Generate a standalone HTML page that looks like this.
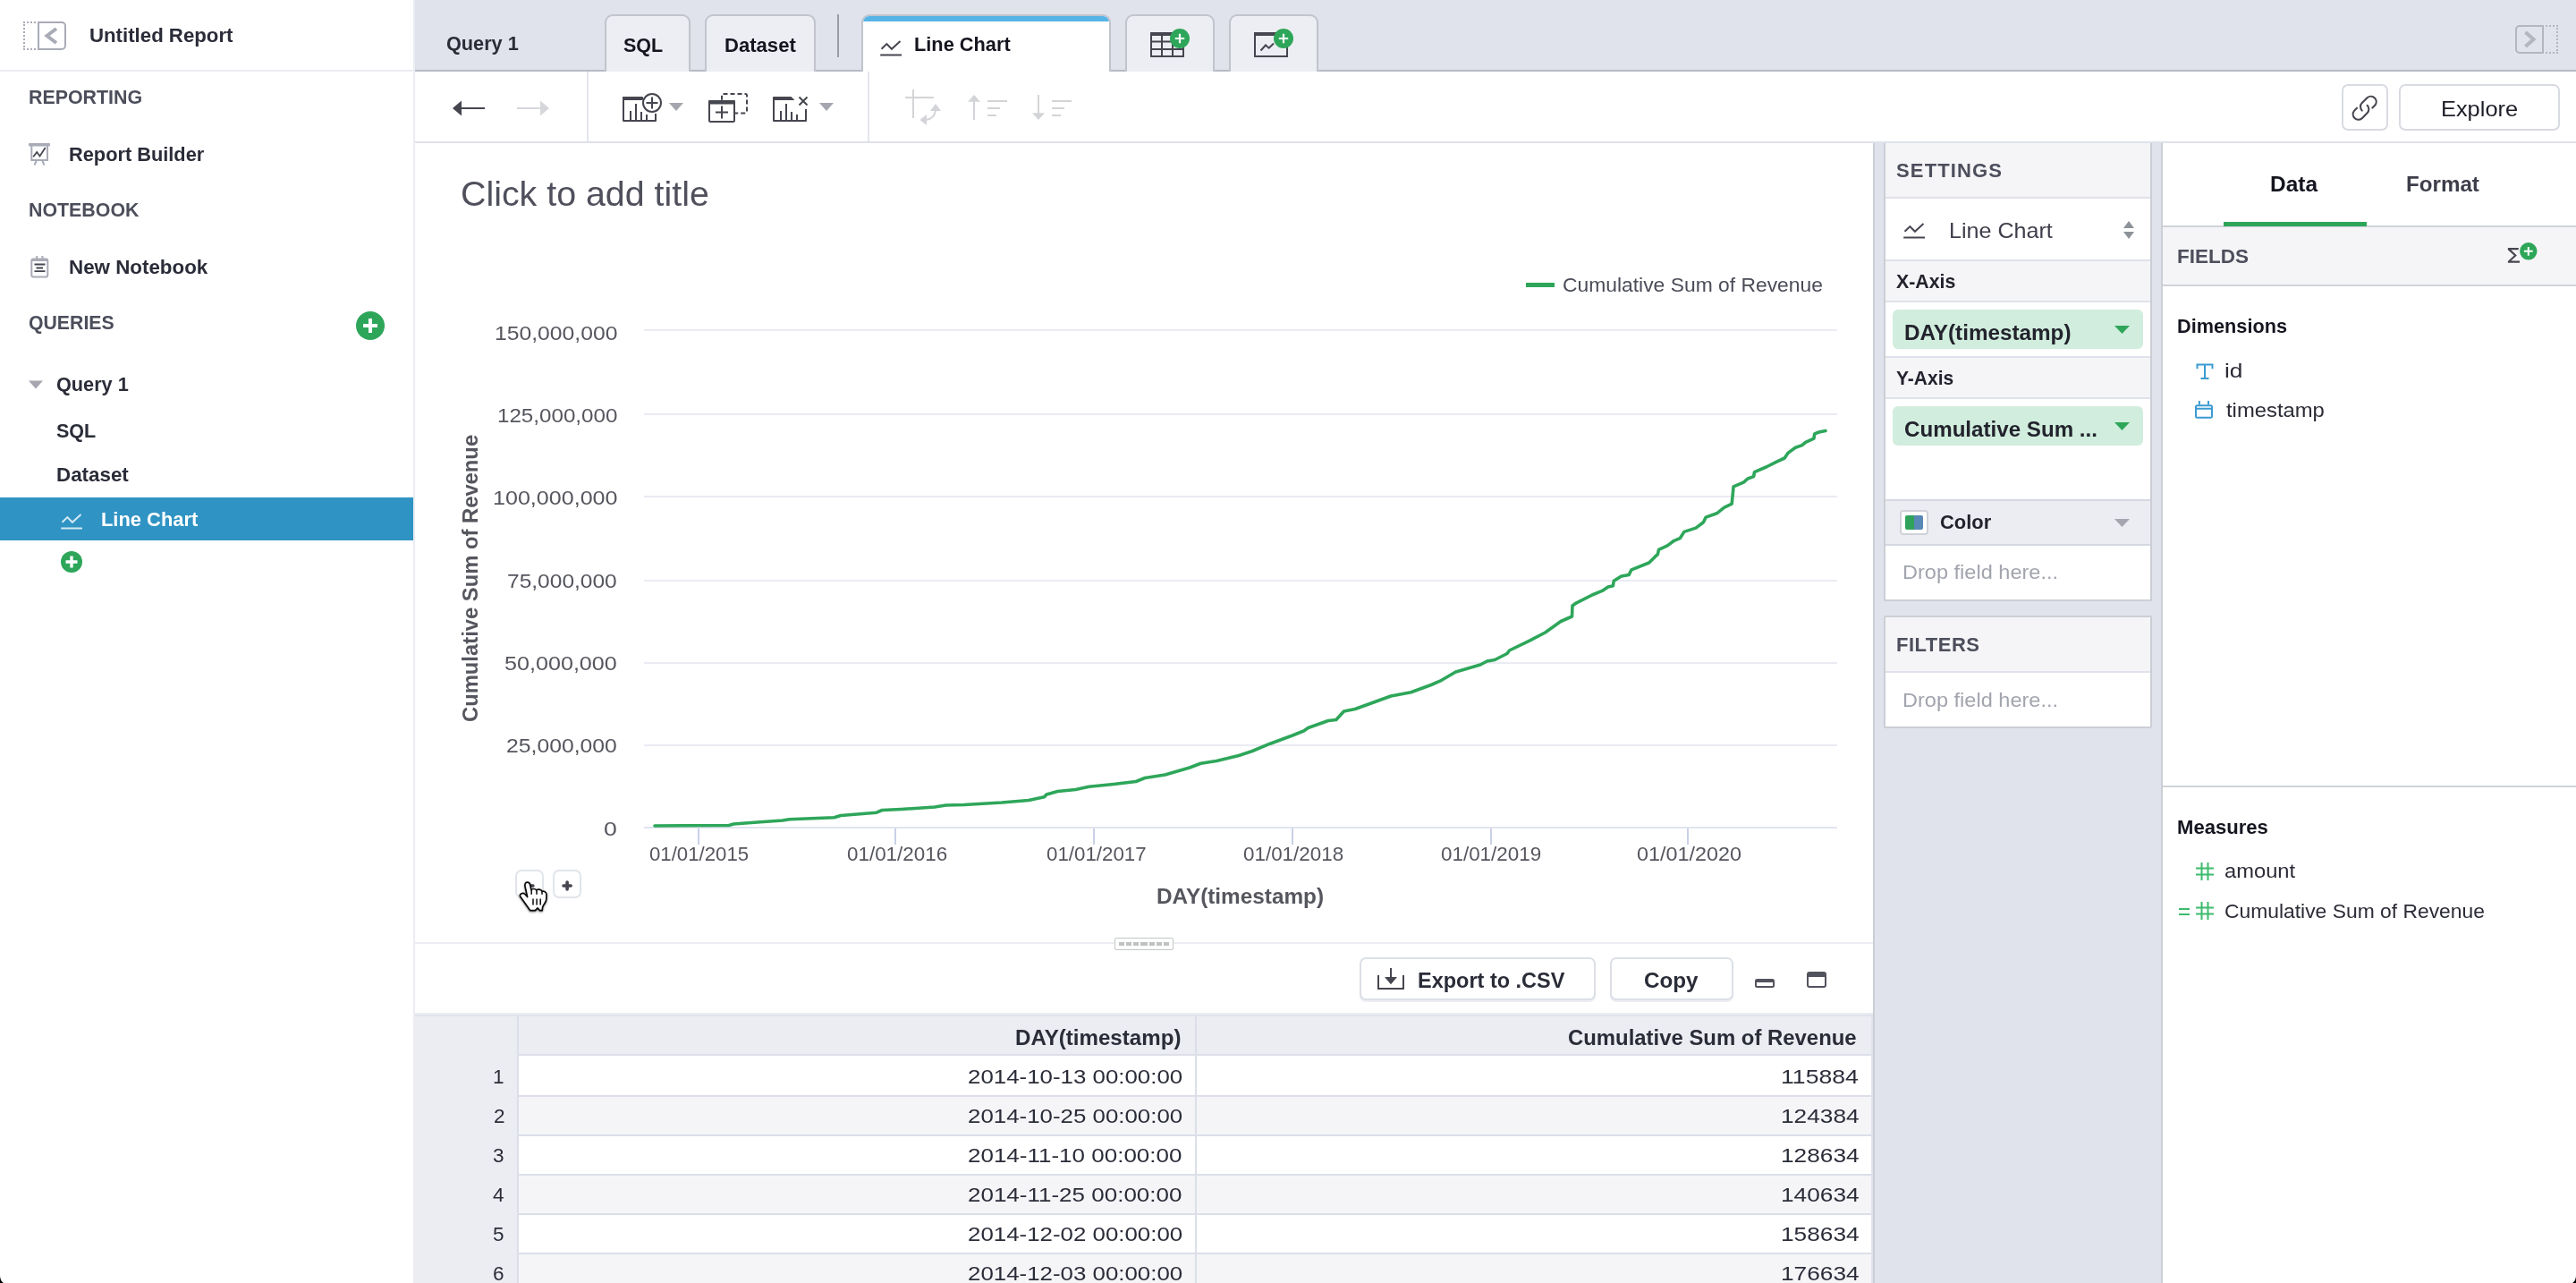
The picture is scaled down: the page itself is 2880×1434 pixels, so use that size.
<!DOCTYPE html>
<html lang="en"><head><meta charset="utf-8"><title>Untitled Report - Line Chart</title>
<style>
html,body{margin:0;padding:0;width:2880px;height:1434px;overflow:hidden;}
body{width:2880px;height:1434px;overflow:hidden;background:#fff;position:relative;font-family:"Liberation Sans",sans-serif;}
div,span.t,svg.i{position:absolute;box-sizing:border-box;}
span.t{white-space:pre;transform-origin:0 0;display:block;}
svg.i{overflow:visible;}
</style></head><body>
<div id="app" style="left:0;top:0;width:2880px;height:1434px;overflow:hidden;">
<!-- sidebar -->
<div style="left:0px;top:0px;width:462px;height:1434px;background:#fff;"></div>
<div style="left:462px;top:0px;width:2px;height:1434px;background:#ecedf3;"></div>
<div style="left:0px;top:78px;width:462px;height:2px;background:#ecedf3;"></div>
<div style="left:26px;top:24px;width:18px;height:32px;border:2px dotted #a9abb6;border-right:none;"></div>
<div style="left:42px;top:24px;width:32px;height:32px;border:2px solid #a9abb6;border-radius:0 5px 5px 0;"></div>
<svg class="i" style="left:42px;top:24px;" width="32" height="32" viewBox="0 0 32 32"><path d="M21 8 L10.5 16 L21 24" fill="none" stroke="#a9abb6" stroke-width="4"/></svg>
<span class="t" style="left:100.01px;top:29px;font-size:22.5px;line-height:22.5px;color:#2a2c38;font-weight:bold;transform:scaleX(0.9876);">Untitled Report</span>
<span class="t" style="left:31.55px;top:98px;font-size:22.5px;line-height:22.5px;color:#4c4e5b;font-weight:bold;transform:scaleX(0.9504);">REPORTING</span>
<span class="t" style="left:77.03px;top:162px;font-size:22.5px;line-height:22.5px;color:#2a2c38;font-weight:bold;transform:scaleX(0.9677);">Report Builder</span>
<span class="t" style="left:31.55px;top:224px;font-size:22.5px;line-height:22.5px;color:#4c4e5b;font-weight:bold;transform:scaleX(0.9496);">NOTEBOOK</span>
<span class="t" style="left:77.01px;top:288px;font-size:22.5px;line-height:22.5px;color:#2a2c38;font-weight:bold;transform:scaleX(0.9935);">New Notebook</span>
<span class="t" style="left:31.56px;top:350px;font-size:22.5px;line-height:22.5px;color:#4c4e5b;font-weight:bold;transform:scaleX(0.9444);">QUERIES</span>
<span class="t" style="left:63.04px;top:419px;font-size:22.5px;line-height:22.5px;color:#2a2c38;font-weight:bold;transform:scaleX(0.9634);">Query 1</span>
<span class="t" style="left:63.04px;top:471px;font-size:22.5px;line-height:22.5px;color:#2a2c38;font-weight:bold;transform:scaleX(0.9556);">SQL</span>
<span class="t" style="left:63.01px;top:520px;font-size:22.5px;line-height:22.5px;color:#2a2c38;font-weight:bold;transform:scaleX(0.9938);">Dataset</span>
<div style="left:0px;top:556px;width:462px;height:48px;background:#2f93c3;"></div>
<span class="t" style="left:113.03px;top:570px;font-size:22.5px;line-height:22.5px;color:#fff;font-weight:bold;transform:scaleX(0.9727);">Line Chart</span>
<svg class="i" style="left:30px;top:158px;" width="28" height="28" viewBox="0 0 28 28"><rect x="2" y="2" width="24" height="3.5" rx="1" fill="#a9abb6"/>
<path d="M5.300 5 V21 H23 V5" fill="none" stroke="#a9abb6" stroke-width="2"/>
<path d="M11 21 L8.5 26.5 M17 21 L19.5 26.5" stroke="#a9abb6" stroke-width="2" fill="none"/>
<path d="M7.2 17.2 L11.2 12 L14.5 16.5 L20.7 7" fill="none" stroke="#45464f" stroke-width="1.8"/></svg>
<svg class="i" style="left:30px;top:284px;" width="28" height="28" viewBox="0 0 28 28"><rect x="5.300" y="5.500" width="18" height="20" rx="2" fill="none" stroke="#a9abb6" stroke-width="2"/>
<rect x="5.300" y="5" width="18" height="3" fill="#a9abb6"/>
<path d="M11.2 2 V6 M17.4 2 V6" stroke="#a9abb6" stroke-width="2"/>
<path d="M8.5 11.5 H20.5 M10.5 15.5 H18 M8.5 19.2 H20.5" stroke="#45464f" stroke-width="1.8"/></svg>
<svg class="i" style="left:398px;top:348px;" width="32" height="32" viewBox="0 0 32 32"><circle cx="16" cy="16" r="16" fill="#2ea65a"/><path d="M16 8 V24 M8 16 H24" stroke="#fff" stroke-width="4"/></svg>
<svg class="i" style="left:32px;top:425px;" width="16" height="10" viewBox="0 0 16 10"><path d="M0 0.5 H16 L8 9.5 Z" fill="#a5a6b0"/></svg>
<svg class="i" style="left:68px;top:573.5px;" width="24" height="18" viewBox="0 0 24 18"><path d="M1.5 9.8 L7.4 4.1 L12.9 9.8 L22.5 1" fill="none" stroke="#d3e9f4" stroke-width="2"/><path d="M0.2 16.5 H24" stroke="#d3e9f4" stroke-width="2"/></svg>
<svg class="i" style="left:68px;top:616px;" width="24" height="24" viewBox="0 0 24 24"><circle cx="12" cy="12" r="12" fill="#2ea65a"/><path d="M12 5.5 V18.5 M5.5 12 H18.5" stroke="#fff" stroke-width="3.4"/></svg>
<!-- tab bar -->
<div style="left:464px;top:0px;width:2416px;height:80px;background:#e0e3ec;"></div>
<div style="left:464px;top:78px;width:2416px;height:2px;background:#b7bac4;"></div>
<span class="t" style="left:499.04px;top:38px;font-size:22.5px;line-height:22.5px;color:#2a2c38;font-weight:bold;transform:scaleX(0.9634);">Query 1</span>
<div style="left:676px;top:16px;width:96px;height:64px;background:#edeef3;border:2px solid #c1c4cd;border-bottom:none;border-radius:9px 9px 0 0;overflow:hidden;"></div>
<div style="left:788px;top:16px;width:124px;height:64px;background:#edeef3;border:2px solid #c1c4cd;border-bottom:none;border-radius:9px 9px 0 0;overflow:hidden;"></div>
<div style="left:936px;top:16px;width:2px;height:48px;background:#9b9da8;"></div>
<div style="left:962.5px;top:16px;width:279px;height:64px;background:#fff;border:2px solid #c1c4cd;border-bottom:none;border-radius:9px 9px 0 0;overflow:hidden;"><div style="left:0;top:0;right:0;height:6px;background:#56b4e6;width:100%"></div></div>
<div style="left:1258px;top:16px;width:100px;height:64px;background:#edeef3;border:2px solid #c1c4cd;border-bottom:none;border-radius:9px 9px 0 0;overflow:hidden;"></div>
<div style="left:1374px;top:16px;width:100px;height:64px;background:#edeef3;border:2px solid #c1c4cd;border-bottom:none;border-radius:9px 9px 0 0;overflow:hidden;"></div>
<span class="t" style="left:697.04px;top:40px;font-size:22.5px;line-height:22.5px;color:#14151f;font-weight:bold;transform:scaleX(0.9556);">SQL</span>
<span class="t" style="left:810.02px;top:40px;font-size:22.5px;line-height:22.5px;color:#14151f;font-weight:bold;transform:scaleX(0.9812);">Dataset</span>
<svg class="i" style="left:984px;top:44.5px;" width="24" height="18" viewBox="0 0 24 18"><path d="M1.5 9.8 L7.4 4.1 L12.9 9.8 L22.5 1" fill="none" stroke="#45464f" stroke-width="2"/><path d="M0.2 16.5 H24" stroke="#45464f" stroke-width="2"/></svg>
<span class="t" style="left:1021.53px;top:39px;font-size:22.5px;line-height:22.5px;color:#14151f;font-weight:bold;transform:scaleX(0.9682);">Line Chart</span>
<svg class="i" style="left:1286px;top:36px;" width="38" height="28" viewBox="0 0 38 28"><path d="M1 1 H37 V27 H1 Z" fill="none" stroke="#45464f" stroke-width="2"/>
<rect x="0" y="0" width="38" height="4" rx="1" fill="#45464f"/>
<path d="M13 2 V27 M25 2 V27 M1 10.5 H37 M1 19 H37" stroke="#45464f" stroke-width="2" fill="none"/></svg>
<svg class="i" style="left:1308px;top:32px;" width="22" height="22" viewBox="0 0 22 22"><circle cx="11" cy="11" r="11" fill="#2ea65a"/><path d="M11 5.8 V16.2 M5.8 11 H16.2" stroke="#fff" stroke-width="2.2"/></svg>
<svg class="i" style="left:1402px;top:36px;" width="38" height="28" viewBox="0 0 38 28"><path d="M1 1 H37 V27 H1 Z" fill="none" stroke="#45464f" stroke-width="2"/>
<rect x="0" y="0" width="38" height="4" rx="1" fill="#45464f"/>
<path d="M7.5 20.5 L13 14.5 L16.7 17.7 L22 12.5" stroke="#45464f" stroke-width="2" fill="none"/></svg>
<svg class="i" style="left:1424px;top:32px;" width="22" height="22" viewBox="0 0 22 22"><circle cx="11" cy="11" r="11" fill="#2ea65a"/><path d="M11 5.8 V16.2 M5.8 11 H16.2" stroke="#fff" stroke-width="2.2"/></svg>
<div style="left:2812px;top:28px;width:32px;height:32px;border:2px solid #b3b5c0;border-radius:5px 0 0 5px;"></div>
<div style="left:2842px;top:28px;width:18px;height:32px;border:2px dotted #b3b5c0;border-left:none;"></div>
<svg class="i" style="left:2812px;top:28px;" width="32" height="32" viewBox="0 0 32 32"><path d="M11.5 8 L20.5 16 L11.5 24" fill="none" stroke="#b3b5c0" stroke-width="4"/></svg>
<!-- toolbar -->
<div style="left:464px;top:80px;width:2416px;height:78px;background:#fff;"></div>
<div style="left:464px;top:158px;width:2416px;height:2px;background:#dfe2ea;"></div>
<div style="left:656px;top:80px;width:2px;height:78px;background:#e4e6ed;"></div>
<div style="left:970px;top:80px;width:2px;height:78px;background:#e4e6ed;"></div>
<svg class="i" style="left:506px;top:111px;" width="36" height="20" viewBox="0 0 36 20"><path d="M0 10 L10 1.5 V18.5 Z" fill="#45464f"/><path d="M8 10 H36" stroke="#45464f" stroke-width="2"/></svg>
<svg class="i" style="left:578px;top:111px;" width="36" height="20" viewBox="0 0 36 20"><path d="M36 10 L26 1.5 V18.5 Z" fill="#d6d7db"/><path d="M0 10 H28" stroke="#d6d7db" stroke-width="2"/></svg>
<svg class="i" style="left:696px;top:102px;" width="46" height="36" viewBox="0 0 46 36"><path d="M1 7 V33 H37 V25" fill="none" stroke="#45464f" stroke-width="2" stroke-linejoin="round"/>
<path d="M0 8 H22 V6 H0 Z M0 6 H24" fill="#45464f" stroke="#45464f" stroke-width="0"/>
<rect x="0" y="6" width="23" height="4" rx="1" fill="#45464f"/>
<path d="M9 22 V33 M15 14 V33 M21 23 V33 M27 26 V33" stroke="#45464f" stroke-width="2"/>
<circle cx="33" cy="13" r="10" fill="#fff" stroke="#45464f" stroke-width="2"/>
<path d="M33 6.5 V19.5 M26.5 13 H39.5" stroke="#45464f" stroke-width="2"/></svg>
<svg class="i" style="left:748px;top:114.5px;" width="16" height="9" viewBox="0 0 16 9"><path d="M0 0 H16 L8 9 Z" fill="#a5a6b0"/></svg>
<svg class="i" style="left:792px;top:102px;" width="46" height="36" viewBox="0 0 46 36"><rect x="15" y="3" width="28" height="21.5" rx="1.5" fill="none" stroke="#45464f" stroke-width="2" stroke-dasharray="5 3"/>
<rect x="1" y="11" width="28" height="23" rx="1.5" fill="#fff" stroke="#45464f" stroke-width="2"/>
<rect x="0" y="10" width="30" height="4.5" rx="1" fill="#45464f"/>
<path d="M15 16.5 V30.5 M8 23.5 H22" stroke="#45464f" stroke-width="2"/></svg>
<svg class="i" style="left:864px;top:102px;" width="46" height="36" viewBox="0 0 46 36"><path d="M1 7 V33 H37 V20" fill="none" stroke="#45464f" stroke-width="2" stroke-linejoin="round"/>
<path d="M0 6.8 Q0 6 1 6 H20.5 L24.5 10 H0 Z" fill="#45464f"/>
<path d="M9 22 V33 M15 14 V33 M21 23 V33 M27 26 V33" stroke="#45464f" stroke-width="2"/>
<path d="M29.5 6.5 L38.5 15.5 M38.5 6.5 L29.5 15.5" stroke="#45464f" stroke-width="2"/></svg>
<svg class="i" style="left:916px;top:114.5px;" width="16" height="9" viewBox="0 0 16 9"><path d="M0 0 H16 L8 9 Z" fill="#a5a6b0"/></svg>
<svg class="i" style="left:1010px;top:98px;" width="46" height="44" viewBox="0 0 46 44"><path d="M11 2 V34 M2 11 H34" stroke="#d3d4d7" stroke-width="2"/>
<path d="M36 25 Q35 35 25 36" fill="none" stroke="#d3d4d7" stroke-width="2"/>
<path d="M36 18 L30 26 H42 Z M18.5 36 L26 30 V42 Z" fill="#d3d4d7"/></svg>
<svg class="i" style="left:1080px;top:104px;" width="48" height="32" viewBox="0 0 48 32"><path d="M9 8 V30" stroke="#d3d4d7" stroke-width="2"/><path d="M9 2 L2 9.8 H16 Z" fill="#d3d4d7"/>
<path d="M24 9 H46 M24 17 H38 M24 25 H34" stroke="#d3d4d7" stroke-width="2"/></svg>
<svg class="i" style="left:1152px;top:104px;" width="48" height="32" viewBox="0 0 48 32"><path d="M9 2 V24" stroke="#d3d4d7" stroke-width="2"/><path d="M9 30 L2 22.2 H16 Z" fill="#d3d4d7"/>
<path d="M24 9 H46 M24 17 H38 M24 25 H34" stroke="#d3d4d7" stroke-width="2"/></svg>
<div style="left:2618px;top:94px;width:52px;height:52px;background:#fff;border:2px solid #d9dbe2;border-radius:7px;"></div>
<div style="left:2682px;top:94px;width:180px;height:52px;background:#fff;border:2px solid #d9dbe2;border-radius:7px;"></div>
<svg class="i" style="left:2625.3px;top:101.8px;" width="37.4" height="37.4" viewBox="0 0 32 32"><g fill="none" stroke="#45464f" stroke-width="1.8" stroke-linecap="round">
<path d="M13.5 18.5 a5.2 5.2 0 0 1 0 -7.3 l5.2 -5.2 a5.2 5.2 0 0 1 7.3 7.3 l-2.6 2.6"/>
<path d="M18.5 13.5 a5.2 5.2 0 0 1 0 7.3 l-5.2 5.2 a5.2 5.2 0 0 1 -7.3 -7.3 l2.6 -2.6"/></g></svg>
<span class="t" style="left:2728.88px;top:110px;font-size:24px;line-height:24px;color:#1c1d27;transform:scaleX(1.0577);">Explore</span>
<!-- chart area -->
<div style="left:464px;top:160px;width:1630px;height:1274px;background:#fff;"></div>
<span class="t" style="left:514.96px;top:198px;font-size:38.5px;line-height:38.5px;color:#4f505c;transform:scaleX(1.0224);">Click to add title</span>
<div style="left:1706px;top:316px;width:32px;height:4.5px;background:#2ea65a;"></div>
<span class="t" style="left:1747.48px;top:308px;font-size:22.5px;line-height:22.5px;color:#4a4c58;transform:scaleX(1.0158);">Cumulative Sum of Revenue</span>
<div style="left:720px;top:368px;width:1334px;height:2px;background:#eaebf3;"></div>
<div style="left:720px;top:462px;width:1334px;height:2px;background:#eaebf3;"></div>
<div style="left:720px;top:554px;width:1334px;height:2px;background:#eaebf3;"></div>
<div style="left:720px;top:648px;width:1334px;height:2px;background:#eaebf3;"></div>
<div style="left:720px;top:740px;width:1334px;height:2px;background:#eaebf3;"></div>
<div style="left:720px;top:832px;width:1334px;height:2px;background:#eaebf3;"></div>
<div style="left:720px;top:924px;width:1334px;height:2px;background:#e1e4f0;"></div>
<span class="t" style="left:552.80px;top:362px;font-size:22.5px;line-height:22.5px;color:#55565e;transform:scaleX(1.0984);">150,000,000</span>
<span class="t" style="left:555.85px;top:454px;font-size:22.5px;line-height:22.5px;color:#55565e;transform:scaleX(1.0738);">125,000,000</span>
<span class="t" style="left:550.77px;top:546px;font-size:22.5px;line-height:22.5px;color:#55565e;transform:scaleX(1.1148);">100,000,000</span>
<span class="t" style="left:566.91px;top:639px;font-size:22.5px;line-height:22.5px;color:#55565e;transform:scaleX(1.0901);">75,000,000</span>
<span class="t" style="left:563.88px;top:731px;font-size:22.5px;line-height:22.5px;color:#55565e;transform:scaleX(1.1171);">50,000,000</span>
<span class="t" style="left:565.90px;top:823px;font-size:22.5px;line-height:22.5px;color:#55565e;transform:scaleX(1.0991);">25,000,000</span>
<span class="t" style="left:674.82px;top:916px;font-size:22.5px;line-height:22.5px;color:#55565e;transform:scaleX(1.1818);">0</span>
<div style="left:780px;top:926px;width:2px;height:17.5px;background:#c9d0e8;"></div>
<span class="t" style="left:725.51px;top:944px;font-size:22.5px;line-height:22.5px;color:#55565e;transform:scaleX(0.9865);">01/01/2015</span>
<div style="left:1000px;top:926px;width:2px;height:17.5px;background:#c9d0e8;"></div>
<span class="t" style="left:946.50px;top:944px;font-size:22.5px;line-height:22.5px;color:#55565e;transform:scaleX(0.9955);">01/01/2016</span>
<div style="left:1222px;top:926px;width:2px;height:17.5px;background:#c9d0e8;"></div>
<span class="t" style="left:1169.51px;top:944px;font-size:22.5px;line-height:22.5px;color:#55565e;transform:scaleX(0.9909);">01/01/2017</span>
<div style="left:1444px;top:926px;width:2px;height:17.5px;background:#c9d0e8;"></div>
<span class="t" style="left:1390.00px;top:944px;font-size:22.5px;line-height:22.5px;color:#55565e;transform:scaleX(0.9955);">01/01/2018</span>
<div style="left:1666px;top:926px;width:2px;height:17.5px;background:#c9d0e8;"></div>
<span class="t" style="left:1611.00px;top:944px;font-size:22.5px;line-height:22.5px;color:#55565e;transform:scaleX(0.9955);">01/01/2019</span>
<div style="left:1886px;top:926px;width:2px;height:17.5px;background:#c9d0e8;"></div>
<span class="t" style="left:1829.96px;top:944px;font-size:22.5px;line-height:22.5px;color:#55565e;transform:scaleX(1.0378);">01/01/2020</span>
<span class="t" style="left:1293.47px;top:990px;font-size:24px;line-height:24px;color:#55565e;font-weight:bold;transform:scaleX(1.0138);">DAY(timestamp)</span>
<div style="left:525px;top:646px;width:0;height:0;transform:rotate(-90deg);">
<span class="t" style="left:-160.78px;top:-10px;font-size:23px;line-height:23px;color:#55565e;font-weight:bold;transform:scaleX(1.0340);">Cumulative Sum of Revenue</span>
</div>
<svg class="i" style="left:0;top:0" width="2100" height="1000" viewBox="0 0 2100 1000"><path d="M732 923 L815 922.5 L820 921 L850 918.8 L875 917 L882.5 915.8 L932.5 913.8 L940 911.5 L980 908.2 L986.2 905.5 L1007.5 904.5 L1045 902 L1057.5 900 L1077.5 899.5 L1120 897 L1150 894.5 L1167.5 890.8 L1170 888 L1182.5 884.5 L1202.5 882.5 L1217.5 879.2 L1245 876.5 L1270 873.5 L1280 869.5 L1302.5 866 L1330 858 L1342.5 853.2 L1360 850.5 L1385 844.5 L1400 839.5 L1420 831.2 L1445 822 L1457.5 817 L1462.5 813.5 L1485 805.5 L1493.8 804.5 L1502.5 795 L1515 792.5 L1555 778 L1577.5 773.8 L1600 765.5 L1610 761.2 L1627.5 751 L1655 743 L1662.5 739 L1671.2 737.5 L1685 730.5 L1687.5 727 L1710 716.2 L1727.5 707 L1745 694.5 L1757.5 689 L1758 677 L1762.5 673.8 L1780 665 L1791.2 660.4 L1797.8 656.1 L1803.4 654.8 L1804.3 649.2 L1812.7 643.9 L1821.2 642.4 L1824 636.8 L1843.6 629 L1850.2 622.4 L1853.3 619.6 L1854.5 614.4 L1864.2 609.9 L1871.7 604.3 L1878.2 601.7 L1882.9 594.4 L1896 590.1 L1904.4 583.7 L1907.2 578.1 L1919.4 573.8 L1927.8 567.2 L1936.2 563.1 L1938.1 543.8 L1949.3 539.2 L1954 535 L1960.6 532.6 L1961.5 527.6 L1974.6 522 L1985.8 516.3 L1995.2 512 L1998.9 506.4 L2007.3 500.2 L2014.8 497.6 L2018.6 494.3 L2027.9 490.1 L2028.8 484.9 L2033.5 483 L2041 481.5" fill="none" stroke="#2ea65a" stroke-width="3.6" stroke-linejoin="round" stroke-linecap="round"/></svg>
<div style="left:576px;top:972px;width:32px;height:32px;background:#fff;border:2px solid #e1e4eb;border-radius:7px;"></div>
<div style="left:618px;top:972px;width:32px;height:32px;background:#fff;border:2px solid #e1e4eb;border-radius:7px;"></div>
<svg class="i" style="left:580px;top:980px;" width="24" height="20" viewBox="0 0 24 20"><path d="M10.300 10 H15.900" stroke="#45464f" stroke-width="3.6" stroke-linecap="round"/></svg>
<svg class="i" style="left:622px;top:978px;" width="24" height="24" viewBox="0 0 24 24"><path d="M12.100 7.950 V16.050 M8.050 12 H16.150" stroke="#45464f" stroke-width="3.6" stroke-linecap="round"/></svg>
<svg class="i" style="left:570px;top:980px;filter:drop-shadow(0.5px 1.500px 1.200px rgba(0,0,0,.5));" width="50" height="45" viewBox="570 980 50 45"><path d="M589.600 1002.500 L587 990.500 C586.400 987.500 588 986.200 589.600 986.200 C591.200 986.200 592.300 987.200 592.700 989 L593.900 994.600 C594.600 993.100 599 993 599.800 995.300 C600.500 993.500 605.300 993.800 606 996.500 C607 995.500 611 996.500 611 1000 L610.800 1005 C610.800 1009 607.200 1011 606.600 1014 L606.200 1017.600 L603.600 1017.600 L601 1014.800 L598.400 1017.600 L592.600 1017.600 L590.500 1014.500 L582 1002.600 C581 1001.100 581.300 999.600 582.600 998.900 C584 998.200 585.800 998.300 587 999.500 Z" fill="#fff" stroke="#0b0b0b" stroke-width="1.700" stroke-linejoin="round"/><path d="M594.200 994.600 V999.800 M600 995.400 V999.800 M606 996.600 V999.800" stroke="#0b0b0b" stroke-width="1.500" fill="none"/><path d="M596 1004.500 V1011.600 M600.100 1004.500 V1011.600 M604.200 1004.500 V1011.600" stroke="#0b0b0b" stroke-width="1.500" fill="none"/></svg>
<div style="left:464px;top:1053px;width:1630px;height:2px;background:#ecedf3;"></div>
<div style="left:1246px;top:1048px;width:66px;height:14px;background:#fff;border:1.500px solid #c3c7c7;border-radius:2px;"></div>
<div style="left:1251.2px;top:1053px;width:5.6px;height:3.8px;background:#bfc1c2;"></div>
<div style="left:1259.1px;top:1053px;width:5.6px;height:3.8px;background:#bfc1c2;"></div>
<div style="left:1267.1px;top:1053px;width:5.6px;height:3.8px;background:#bfc1c2;"></div>
<div style="left:1275px;top:1053px;width:7.8px;height:3.8px;background:#bfc1c2;"></div>
<div style="left:1285.1px;top:1053px;width:5.7px;height:3.8px;background:#bfc1c2;"></div>
<div style="left:1293.1px;top:1053px;width:5.6px;height:3.8px;background:#bfc1c2;"></div>
<div style="left:1301px;top:1053px;width:5.9px;height:3.8px;background:#bfc1c2;"></div>
<div style="left:1520px;top:1070px;width:264px;height:48px;background:#fff;border:2px solid #dcdfe6;border-radius:7px;box-shadow:0 2px 0 #eceef3;"></div>
<div style="left:1800px;top:1070px;width:138px;height:48px;background:#fff;border:2px solid #dcdfe6;border-radius:7px;box-shadow:0 2px 0 #eceef3;"></div>
<svg class="i" style="left:1540px;top:1080px;" width="30" height="28" viewBox="0 0 30 28"><path d="M1 10 V25 H29 V10" fill="none" stroke="#45464f" stroke-width="2"/><path d="M15 2 V14" stroke="#45464f" stroke-width="2"/><path d="M8 12 H22 L15 20.300 Z" fill="#45464f"/></svg>
<span class="t" style="left:1585.16px;top:1085px;font-size:23px;line-height:23px;color:#2a2c38;font-weight:bold;transform:scaleX(1.0208);">Export to .CSV</span>
<span class="t" style="left:1838.45px;top:1085px;font-size:23px;line-height:23px;color:#2a2c38;font-weight:bold;transform:scaleX(1.0536);">Copy</span>
<div style="left:1962px;top:1094px;width:22px;height:10px;background:#fff;border:2px solid #52535d;border-top-width:4px;border-radius:2.500px;"></div>
<div style="left:2020px;top:1086px;width:22px;height:18px;background:#fff;border:2px solid #52535d;border-top-width:6px;border-radius:3px;"></div>
<!-- table -->
<div style="left:464px;top:1132px;width:1628px;height:2px;background:#ecedf2;"></div>
<div style="left:464px;top:1134px;width:1628px;height:2px;background:#e1e3ea;"></div>
<div style="left:2092px;top:1132px;width:2px;height:302px;background:#e1e4ee;"></div>
<div style="left:464px;top:1136px;width:1628px;height:298px;background:#ecedf2;"></div>
<div style="left:578px;top:1136px;width:2px;height:298px;background:#dcdfe8;"></div>
<div style="left:580px;top:1178px;width:1512px;height:2px;background:#dcdfe8;"></div>
<div style="left:580px;top:1180px;width:1512px;height:44px;background:#fff;"></div>
<div style="left:580px;top:1224px;width:1512px;height:2px;background:#dcdfe8;"></div>
<span class="t" style="left:550.50px;top:1193px;font-size:22.5px;line-height:22.5px;color:#2a2c38;transform:scaleX(.9999);">1</span>
<span class="t" style="left:1081.85px;top:1193px;font-size:22.5px;line-height:22.5px;color:#2a2c38;transform:scaleX(1.1498);">2014-10-13 00:00:00</span>
<span class="t" style="left:1990.63px;top:1193px;font-size:22.5px;line-height:22.5px;color:#2a2c38;transform:scaleX(1.1831);">115884</span>
<div style="left:580px;top:1226px;width:1512px;height:42px;background:#f5f5f8;"></div>
<div style="left:580px;top:1268px;width:1512px;height:2px;background:#dcdfe8;"></div>
<span class="t" style="left:551.50px;top:1237px;font-size:22.5px;line-height:22.5px;color:#2a2c38;transform:scaleX(.9999);">2</span>
<span class="t" style="left:1081.85px;top:1237px;font-size:22.5px;line-height:22.5px;color:#2a2c38;transform:scaleX(1.1498);">2014-10-25 00:00:00</span>
<span class="t" style="left:1990.67px;top:1237px;font-size:22.5px;line-height:22.5px;color:#2a2c38;transform:scaleX(1.1667);">124384</span>
<div style="left:580px;top:1270px;width:1512px;height:42px;background:#fff;"></div>
<div style="left:580px;top:1312px;width:1512px;height:2px;background:#dcdfe8;"></div>
<span class="t" style="left:550.50px;top:1281px;font-size:22.5px;line-height:22.5px;color:#2a2c38;transform:scaleX(.9999);">3</span>
<span class="t" style="left:1081.84px;top:1281px;font-size:22.5px;line-height:22.5px;color:#2a2c38;transform:scaleX(1.1553);">2014-11-10 00:00:00</span>
<span class="t" style="left:1990.67px;top:1281px;font-size:22.5px;line-height:22.5px;color:#2a2c38;transform:scaleX(1.1667);">128634</span>
<div style="left:580px;top:1314px;width:1512px;height:42px;background:#f5f5f8;"></div>
<div style="left:580px;top:1356px;width:1512px;height:2px;background:#dcdfe8;"></div>
<span class="t" style="left:550.50px;top:1325px;font-size:22.5px;line-height:22.5px;color:#2a2c38;transform:scaleX(.9999);">4</span>
<span class="t" style="left:1081.84px;top:1325px;font-size:22.5px;line-height:22.5px;color:#2a2c38;transform:scaleX(1.1553);">2014-11-25 00:00:00</span>
<span class="t" style="left:1990.67px;top:1325px;font-size:22.5px;line-height:22.5px;color:#2a2c38;transform:scaleX(1.1667);">140634</span>
<div style="left:580px;top:1358px;width:1512px;height:42px;background:#fff;"></div>
<div style="left:580px;top:1400px;width:1512px;height:2px;background:#dcdfe8;"></div>
<span class="t" style="left:550.50px;top:1369px;font-size:22.5px;line-height:22.5px;color:#2a2c38;transform:scaleX(.9999);">5</span>
<span class="t" style="left:1081.85px;top:1369px;font-size:22.5px;line-height:22.5px;color:#2a2c38;transform:scaleX(1.1498);">2014-12-02 00:00:00</span>
<span class="t" style="left:1990.67px;top:1369px;font-size:22.5px;line-height:22.5px;color:#2a2c38;transform:scaleX(1.1667);">158634</span>
<div style="left:580px;top:1402px;width:1512px;height:42px;background:#f5f5f8;"></div>
<div style="left:580px;top:1444px;width:1512px;height:2px;background:#dcdfe8;"></div>
<span class="t" style="left:550.50px;top:1413px;font-size:22.5px;line-height:22.5px;color:#2a2c38;transform:scaleX(.9999);">6</span>
<span class="t" style="left:1081.85px;top:1413px;font-size:22.5px;line-height:22.5px;color:#2a2c38;transform:scaleX(1.1498);">2014-12-03 00:00:00</span>
<span class="t" style="left:1990.67px;top:1413px;font-size:22.5px;line-height:22.5px;color:#2a2c38;transform:scaleX(1.1667);">176634</span>
<div style="left:1336px;top:1136px;width:2px;height:298px;background:#dcdfe8;"></div>
<span class="t" style="left:1135.40px;top:1149px;font-size:23px;line-height:23px;color:#2a2c38;font-weight:bold;transform:scaleX(1.0489);">DAY(timestamp)</span>
<span class="t" style="left:1753.46px;top:1149px;font-size:23px;line-height:23px;color:#2a2c38;font-weight:bold;transform:scaleX(1.0388);">Cumulative Sum of Revenue</span>
<div style="left:2094px;top:160px;width:2px;height:1274px;background:#cbced5;"></div>
<!-- settings column -->
<div style="left:2096px;top:160px;width:320px;height:1274px;background:#e0e3ec;"></div>
<div style="left:2106px;top:160px;width:300px;height:512px;background:#fff;border:2px solid #cbced5;border-top:none;border-radius:0 0 2px 2px;"></div>
<div style="left:2108px;top:160px;width:296px;height:60px;background:#f5f5f8;"></div>
<div style="left:2108px;top:220px;width:296px;height:2px;background:#dfe2ea;"></div>
<span class="t" style="left:2119.50px;top:180px;font-size:22px;line-height:22px;color:#4c4e5b;font-weight:bold;letter-spacing:1.143px;transform:scaleX(.9999);">SETTINGS</span>
<div style="left:2108px;top:290px;width:296px;height:2px;background:#dfe2ea;"></div>
<svg class="i" style="left:2128px;top:248.5px;" width="24" height="18" viewBox="0 0 24 18"><path d="M1.5 9.8 L7.4 4.1 L12.9 9.8 L22.5 1" fill="none" stroke="#45464f" stroke-width="2"/><path d="M0.2 16.5 H24" stroke="#45464f" stroke-width="2"/></svg>
<span class="t" style="left:2178.91px;top:246px;font-size:24px;line-height:24px;color:#3d3e4a;transform:scaleX(1.0459);">Line Chart</span>
<svg class="i" style="left:2374px;top:246.5px;" width="12" height="20" viewBox="0 0 12 20"><path d="M6 0 L12 8 H0 Z M0 12 H12 L6 20 Z" fill="#8e9299"/></svg>
<div style="left:2108px;top:292px;width:296px;height:44px;background:#f5f5f8;"></div>
<div style="left:2108px;top:336px;width:296px;height:2px;background:#dfe2ea;"></div>
<span class="t" style="left:2119.55px;top:304px;font-size:22.5px;line-height:22.5px;color:#22232d;font-weight:bold;transform:scaleX(0.9485);">X-Axis</span>
<div style="left:2116px;top:346px;width:280px;height:44px;background:#d1eddd;border-radius:6px;"></div>
<span class="t" style="left:2128.89px;top:361px;font-size:23px;line-height:23px;color:#22232d;font-weight:bold;transform:scaleX(1.0546);">DAY(timestamp)</span>
<svg class="i" style="left:2363.5px;top:364px;" width="17" height="9" viewBox="0 0 17 9"><path d="M0 0 H17 L8.5 9 Z" fill="#2ea65a"/></svg>
<div style="left:2108px;top:398px;width:296px;height:2px;background:#dfe2ea;"></div>
<div style="left:2108px;top:400px;width:296px;height:44px;background:#f5f5f8;"></div>
<div style="left:2108px;top:444px;width:296px;height:2px;background:#dfe2ea;"></div>
<span class="t" style="left:2119.57px;top:412px;font-size:22.5px;line-height:22.5px;color:#22232d;font-weight:bold;transform:scaleX(0.9328);">Y-Axis</span>
<div style="left:2116px;top:454px;width:280px;height:44px;background:#d1eddd;border-radius:6px;"></div>
<span class="t" style="left:2129.45px;top:469px;font-size:23px;line-height:23px;color:#22232d;font-weight:bold;transform:scaleX(1.0493);">Cumulative Sum ...</span>
<svg class="i" style="left:2363.5px;top:472px;" width="17" height="9" viewBox="0 0 17 9"><path d="M0 0 H17 L8.5 9 Z" fill="#2ea65a"/></svg>
<div style="left:2108px;top:558px;width:296px;height:2px;background:#d5d8e0;"></div>
<div style="left:2108px;top:560px;width:296px;height:48px;background:#ecedf2;"></div>
<div style="left:2108px;top:608px;width:296px;height:2px;background:#d5d8e0;"></div>
<div style="left:2124px;top:570px;width:31.5px;height:27.5px;background:#fff;border:2px solid #cfd2d8;border-radius:4px;"></div>
<div style="left:2130px;top:576px;width:10px;height:16px;background:#2fa25c;border-radius:2px 0 0 2px;"></div>
<div style="left:2140px;top:576px;width:10px;height:16px;background:#5889b6;border-radius:0 2px 2px 0;"></div>
<span class="t" style="left:2169.03px;top:573px;font-size:22.5px;line-height:22.5px;color:#22232d;font-weight:bold;transform:scaleX(0.9741);">Color</span>
<svg class="i" style="left:2363.5px;top:580px;" width="17" height="9" viewBox="0 0 17 9"><path d="M0 0 H17 L8.5 9 Z" fill="#a5a6b0"/></svg>
<span class="t" style="left:2126.91px;top:629px;font-size:22.5px;line-height:22.5px;color:#a2a4ae;transform:scaleX(1.0463);">Drop field here...</span>
<div style="left:2106px;top:688px;width:300px;height:126px;background:#fff;border:2px solid #cbced5;border-radius:2px;"></div>
<div style="left:2108px;top:690px;width:296px;height:60px;background:#f5f5f8;"></div>
<div style="left:2108px;top:750px;width:296px;height:2px;background:#dfe2ea;"></div>
<span class="t" style="left:2119.50px;top:710px;font-size:22px;line-height:22px;color:#4c4e5b;font-weight:bold;letter-spacing:0.500px;transform:scaleX(.9999);">FILTERS</span>
<span class="t" style="left:2126.91px;top:772px;font-size:22.5px;line-height:22.5px;color:#a2a4ae;transform:scaleX(1.0463);">Drop field here...</span>
<!-- fields panel -->
<div style="left:2416px;top:160px;width:2px;height:1274px;background:#cbced5;"></div>
<div style="left:2418px;top:160px;width:462px;height:1274px;background:#fff;"></div>
<span class="t" style="left:2537.96px;top:194px;font-size:24px;line-height:24px;color:#14151f;font-weight:bold;transform:scaleX(1.0200);">Data</span>
<span class="t" style="left:2690.49px;top:194px;font-size:24px;line-height:24px;color:#3d3e4a;font-weight:bold;transform:scaleX(1.0063);">Format</span>
<div style="left:2418px;top:252px;width:462px;height:2px;background:#d0d3db;"></div>
<div style="left:2486px;top:248px;width:160px;height:4.5px;background:#2ea65a;"></div>
<div style="left:2418px;top:254px;width:462px;height:64px;background:#f5f5f8;"></div>
<div style="left:2418px;top:318px;width:462px;height:2px;background:#d0d3db;"></div>
<span class="t" style="left:2434.00px;top:276px;font-size:22.5px;line-height:22.5px;color:#4c4e5b;font-weight:bold;letter-spacing:0.000px;transform:scaleX(.9999);">FIELDS</span>
<svg class="i" style="left:2800px;top:274px" width="22" height="22" viewBox="2800 274 22 22"><path d="M2803.850 277 H2815.850 L2815.650 279.150 H2807.300 L2813.900 285.400 L2807.300 291.400 H2817 V293.750 H2803.850 V292 L2810.800 285.400 L2803.850 279.150 Z" fill="#45464f"/></svg>
<svg class="i" style="left:2817.2px;top:270.5px;" width="19.6" height="19.6" viewBox="0 0 19.6 19.6"><circle cx="9.800" cy="9.800" r="9.750" fill="#2ea65a"/><path d="M9.800 4.900 V14.700 M4.900 9.800 H14.700" stroke="#fff" stroke-width="2"/></svg>
<span class="t" style="left:2433.54px;top:354px;font-size:22.5px;line-height:22.5px;color:#14151f;font-weight:bold;transform:scaleX(0.9643);">Dimensions</span>
<svg class="i" style="left:2455px;top:405.5px;" width="20" height="19" viewBox="0 0 20 19"><path d="M1.5 6.200 V1.500 H18.5 V6.200 M10 1.500 V17 M5.500 17 H14.500" fill="none" stroke="#3b9bd1" stroke-width="2"/></svg>
<span class="t" style="left:2487.33px;top:404px;font-size:22.5px;line-height:22.5px;color:#2b2c36;transform:scaleX(1.1667);">id</span>
<svg class="i" style="left:2454px;top:447px;" width="22" height="21" viewBox="0 0 22 21"><rect x="1" y="6.200" width="18" height="13.500" rx="1.500" fill="none" stroke="#3b9bd1" stroke-width="2"/><path d="M1 9.800 H19 M4.900 1 V5.500 M15 1 V5.500" stroke="#3b9bd1" stroke-width="2"/></svg>
<span class="t" style="left:2488.50px;top:448px;font-size:22.5px;line-height:22.5px;color:#2b2c36;transform:scaleX(1.0583);">timestamp</span>
<div style="left:2418px;top:878px;width:462px;height:2px;background:#d0d3db;"></div>
<span class="t" style="left:2433.52px;top:914px;font-size:22.5px;line-height:22.5px;color:#14151f;font-weight:bold;transform:scaleX(0.9804);">Measures</span>
<svg class="i" style="left:2454.5px;top:964px;" width="20" height="20" viewBox="0 0 20 20"><path d="M6.500 0 V20 M13.500 0 V20 M0 6.500 H20 M0 13.500 H20" stroke="#3dbb6c" stroke-width="2"/></svg>
<span class="t" style="left:2487.45px;top:963px;font-size:22.5px;line-height:22.5px;color:#2b2c36;transform:scaleX(1.0541);">amount</span>
<svg class="i" style="left:2436px;top:1015px;" width="12" height="8" viewBox="0 0 12 8"><path d="M0 1 H12 M0 7 H12" stroke="#3dbb6c" stroke-width="2"/></svg>
<svg class="i" style="left:2454.5px;top:1008px;" width="20" height="20" viewBox="0 0 20 20"><path d="M6.500 0 V20 M13.500 0 V20 M0 6.500 H20 M0 13.500 H20" stroke="#3dbb6c" stroke-width="2"/></svg>
<span class="t" style="left:2487.48px;top:1008px;font-size:22.5px;line-height:22.5px;color:#2b2c36;transform:scaleX(1.0158);">Cumulative Sum of Revenue</span>
<svg class="i" style="left:0;top:1424px" width="2880" height="10" viewBox="0 1424 2880 10"><path d="M0 1426 V1434 H4 A10 10 0 0 1 0 1426 Z M2880 1426 V1434 H2876 A10 10 0 0 0 2880 1426 Z" fill="#000"/></svg>
</div>
</body></html>
